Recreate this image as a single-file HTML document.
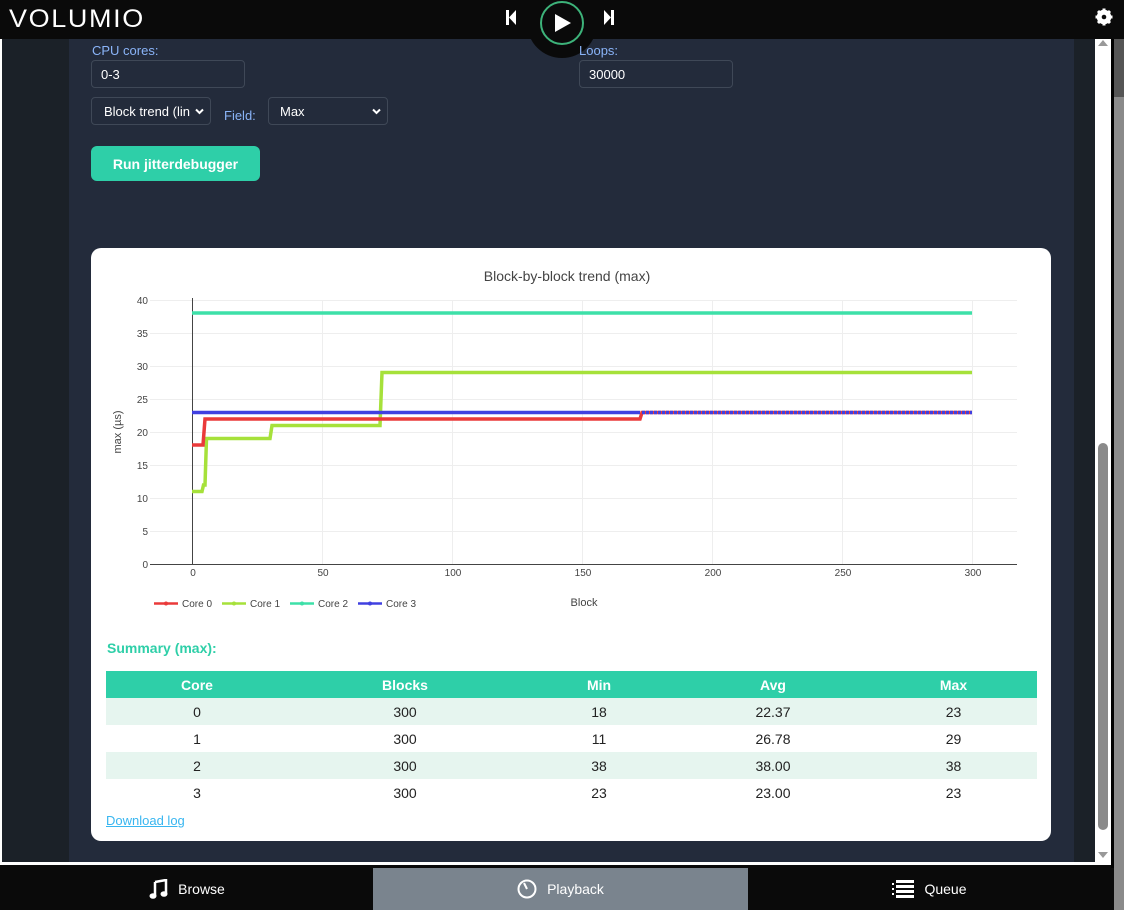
<!DOCTYPE html>
<html><head><meta charset="utf-8"><style>
*{box-sizing:border-box;margin:0;padding:0}
body{width:1124px;height:910px;overflow:hidden;background:#0a0a0a;font-family:"Liberation Sans",Arial,sans-serif;position:relative}
.abs{position:absolute}
.lbl{color:#8ab4f8;font-size:13px}
.inp{background:#232b3b;border:1px solid #3f4857;border-radius:4px;color:#fff;font-size:13px;padding-left:9px;display:flex;align-items:center}
.chev{position:absolute;right:6px;top:10px}
table{border-collapse:collapse;font-size:14px;color:#222}
td,th{text-align:center;height:27px;padding:0}
th{background:#2ecfa8;color:#fff;font-weight:bold}
tr.s td{background:#e6f5ef}
.tab{position:absolute;top:868px;height:42px;display:flex;align-items:center;justify-content:center;color:#fff;font-size:14px;gap:10px}
</style></head><body>
<div class="abs" style="left:0;top:39px;width:1112px;height:826px;background:#fff"></div>
<div class="abs" style="left:2px;top:39px;width:67px;height:823px;background:#1b2128"></div>
<div class="abs" style="left:69px;top:39px;width:1005px;height:823px;background:#232b3b"></div>
<div class="abs" style="left:1074px;top:39px;width:21px;height:823px;background:#1b2128"></div>
<div class="abs" style="left:1095px;top:39px;width:16px;height:823px;background:#fff"></div>
<div class="abs" style="left:1098px;top:443px;width:10px;height:387px;background:#8a8a8a;border-radius:5px"></div>
<div class="abs" style="left:1098px;top:40px;width:0;height:0;border-left:5px solid transparent;border-right:5px solid transparent;border-bottom:6px solid #999"></div>
<div class="abs" style="left:1098px;top:852px;width:0;height:0;border-left:5px solid transparent;border-right:5px solid transparent;border-top:6px solid #999"></div>
<div class="abs" style="left:1111px;top:39px;width:3px;height:829px;background:#000"></div>
<div class="abs" style="left:1114px;top:39px;width:10px;height:58px;background:#555"></div>
<div class="abs" style="left:1114px;top:97px;width:10px;height:813px;background:#8a8a8a"></div>

<div class="abs" style="left:0;top:0;width:1112px;height:39px;background:#0a0a0a"></div>
<div class="abs" style="left:9px;top:6px;color:#fff;font-size:25px;letter-spacing:1.5px;line-height:26px;transform:scaleX(1.08);transform-origin:left">VOLUMIO</div>
<div class="abs" style="left:527px;top:-12px;width:70px;height:70px;border-radius:50%;background:#0a0a0a"></div>
<div class="abs" style="left:540px;top:1px;width:44px;height:44px;border-radius:50%;border:2px solid #3db37a"></div>
<svg class="abs" style="left:500px;top:5px" width="124" height="36">
<polygon points="55,9 55,27 71,18" fill="#fff"/>
<rect x="6" y="5" width="3" height="15" fill="#fff"/><polygon points="16,5 16,20 9,12.5" fill="#fff"/>
<polygon points="104,5 104,20 111,12.5" fill="#fff"/><rect x="111" y="5" width="3" height="15" fill="#fff"/>
</svg>
<svg class="abs" style="left:1095px;top:8px" width="18" height="18" viewBox="0 0 18 18"><circle cx="9" cy="9" r="5.5" fill="none" stroke="#fff" stroke-width="3.5"/><g stroke="#fff" stroke-width="3"><line x1="9" y1="0.5" x2="9" y2="17.5"/><line x1="0.5" y1="9" x2="17.5" y2="9"/><line x1="3" y1="3" x2="15" y2="15"/><line x1="15" y1="3" x2="3" y2="15"/></g><circle cx="9" cy="9" r="2.3" fill="#0a0a0a"/></svg>

<div class="abs lbl" style="left:92px;top:43px">CPU cores:</div>
<div class="abs inp" style="left:91px;top:60px;width:154px;height:28px">0-3</div>
<div class="abs lbl" style="left:579px;top:43px">Loops:</div>
<div class="abs inp" style="left:579px;top:60px;width:154px;height:28px">30000</div>
<div class="abs inp" style="left:91px;top:97px;width:120px;height:28px;padding-left:12px">Block trend (lin<svg class="chev" width="9" height="7"><path d="M1 1.5 L4.5 5 L8 1.5" stroke="#fff" stroke-width="2" fill="none"/></svg></div>
<div class="abs lbl" style="left:224px;top:108px">Field:</div>
<div class="abs inp" style="left:268px;top:97px;width:120px;height:28px;padding-left:11px">Max<svg class="chev" width="9" height="7"><path d="M1 1.5 L4.5 5 L8 1.5" stroke="#fff" stroke-width="2" fill="none"/></svg></div>
<div class="abs" style="left:91px;top:146px;width:169px;height:35px;background:#2ecfa8;border-radius:6px;color:#fff;font-weight:bold;font-size:14px;display:flex;align-items:center;justify-content:center">Run jitterdebugger</div>

<div class="abs" style="left:91px;top:248px;width:960px;height:593px;background:#fff;border-radius:10px"></div>
<svg class="abs" style="left:91px;top:248px" width="960" height="380" font-family="Liberation Sans,Arial,sans-serif">
<g transform="translate(-91,-248)">
<text x="567" y="281" text-anchor="middle" font-size="14" fill="#444">Block-by-block trend (max)</text>
<g stroke="#eee" stroke-width="1">
<line x1="150" y1="300.5" x2="1017" y2="300.5"/><line x1="150" y1="333.5" x2="1017" y2="333.5"/><line x1="150" y1="366.5" x2="1017" y2="366.5"/><line x1="150" y1="399.5" x2="1017" y2="399.5"/><line x1="150" y1="432.5" x2="1017" y2="432.5"/><line x1="150" y1="465.5" x2="1017" y2="465.5"/><line x1="150" y1="498.5" x2="1017" y2="498.5"/><line x1="150" y1="531.5" x2="1017" y2="531.5"/>
<line x1="322.5" y1="300" x2="322.5" y2="564"/><line x1="452.5" y1="300" x2="452.5" y2="564"/><line x1="582.5" y1="300" x2="582.5" y2="564"/><line x1="712.5" y1="300" x2="712.5" y2="564"/><line x1="842.5" y1="300" x2="842.5" y2="564"/><line x1="972.5" y1="300" x2="972.5" y2="564"/>
</g>
<line x1="192.5" y1="298" x2="192.5" y2="564" stroke="#444"/>
<line x1="150" y1="564.5" x2="1017" y2="564.5" stroke="#444"/>
<g font-size="10" fill="#444" text-anchor="end">
<text x="148" y="304">40</text><text x="148" y="337">35</text><text x="148" y="370">30</text><text x="148" y="403">25</text><text x="148" y="436">20</text><text x="148" y="469">15</text><text x="148" y="502">10</text><text x="148" y="535">5</text><text x="148" y="568">0</text>
</g>
<g font-size="10" fill="#444" text-anchor="middle">
<text x="193" y="576">0</text><text x="323" y="576">50</text><text x="453" y="576">100</text><text x="583" y="576">150</text><text x="713" y="576">200</text><text x="843" y="576">250</text><text x="973" y="576">300</text>
</g>
<text transform="translate(121,432) rotate(-90)" text-anchor="middle" font-size="11" fill="#444">max (µs)</text>
<text x="584" y="606" text-anchor="middle" font-size="11" fill="#444">Block</text>
<g fill="none" stroke-width="3.5">
<polyline stroke="#3de0a8" points="192,313 972,313"/>
<polyline stroke="#a6e13a" points="192,491.5 202,491.5 203.5,485 205,485 206.5,438.5 270,438.5 272,425.5 380,425.5 382,372.5 972,372.5"/>
<polyline stroke="#ea3a3a" points="192,445 203,445 205,419 640,419 642,412.5 972,412.5"/>
<polyline stroke="#4040e0" points="192,412.5 640,412.5"/>
<polyline stroke="#4040e0" stroke-dasharray="3 1" points="642,412.5 972,412.5"/>
</g>
<g font-size="10" fill="#444">
<line x1="154" y1="603.5" x2="178" y2="603.5" stroke="#ea3a3a" stroke-width="2.5"/><circle cx="166" cy="603.5" r="2" fill="#ea3a3a"/><text x="182" y="607">Core 0</text>
<line x1="222" y1="603.5" x2="246" y2="603.5" stroke="#a6e13a" stroke-width="2.5"/><circle cx="234" cy="603.5" r="2" fill="#a6e13a"/><text x="250" y="607">Core 1</text>
<line x1="290" y1="603.5" x2="314" y2="603.5" stroke="#3de0a8" stroke-width="2.5"/><circle cx="302" cy="603.5" r="2" fill="#3de0a8"/><text x="318" y="607">Core 2</text>
<line x1="358" y1="603.5" x2="382" y2="603.5" stroke="#4040e0" stroke-width="2.5"/><circle cx="370" cy="603.5" r="2" fill="#4040e0"/><text x="386" y="607">Core 3</text>
</g>
</g></svg>
<div class="abs" style="left:107px;top:640px;color:#2ecfa8;font-weight:bold;font-size:14px">Summary (max):</div>
<table class="abs" style="left:106px;top:671px;width:931px">
<tr><th style="width:182px">Core</th><th style="width:234px">Blocks</th><th style="width:154px">Min</th><th style="width:194px">Avg</th><th>Max</th></tr>
<tr class="s"><td>0</td><td>300</td><td>18</td><td>22.37</td><td>23</td></tr>
<tr><td>1</td><td>300</td><td>11</td><td>26.78</td><td>29</td></tr>
<tr class="s"><td>2</td><td>300</td><td>38</td><td>38.00</td><td>38</td></tr>
<tr><td>3</td><td>300</td><td>23</td><td>23.00</td><td>23</td></tr>
</table>
<div class="abs" style="left:106px;top:813px;color:#38b6f0;font-size:13px;text-decoration:underline">Download log</div>

<div class="abs" style="left:0;top:868px;width:1111px;height:42px;background:#0a0a0a"></div>
<div class="abs" style="left:373px;top:868px;width:375px;height:42px;background:#7a848e"></div>
<div class="tab" style="left:0;width:373px"><svg width="20" height="20" viewBox="0 0 20 20"><path d="M7 3 L18 1 L18 15" stroke="#fff" stroke-width="2.5" fill="none"/><path d="M7 3 L7 17" stroke="#fff" stroke-width="2.5"/><ellipse cx="5" cy="17" rx="3.5" ry="2.8" fill="#fff"/><ellipse cx="16" cy="15" rx="3.5" ry="2.8" fill="#fff"/></svg>Browse</div>
<div class="tab" style="left:373px;width:375px"><svg width="20" height="20" viewBox="0 0 20 20"><circle cx="10" cy="10" r="8.5" stroke="#fff" stroke-width="2" fill="none"/><line x1="10" y1="10" x2="7" y2="4" stroke="#fff" stroke-width="2"/></svg>Playback</div>
<div class="tab" style="left:748px;width:363px"><svg width="22" height="18" viewBox="0 0 22 18"><g fill="#fff"><rect x="4" y="0" width="18" height="3"/><rect x="4" y="5" width="18" height="3"/><rect x="4" y="10" width="18" height="3"/><rect x="4" y="15" width="18" height="3"/><rect x="0" y="3" width="2" height="2"/><rect x="0" y="8" width="2" height="2"/><rect x="0" y="13" width="2" height="2"/></g></svg>Queue</div>
</body></html>
